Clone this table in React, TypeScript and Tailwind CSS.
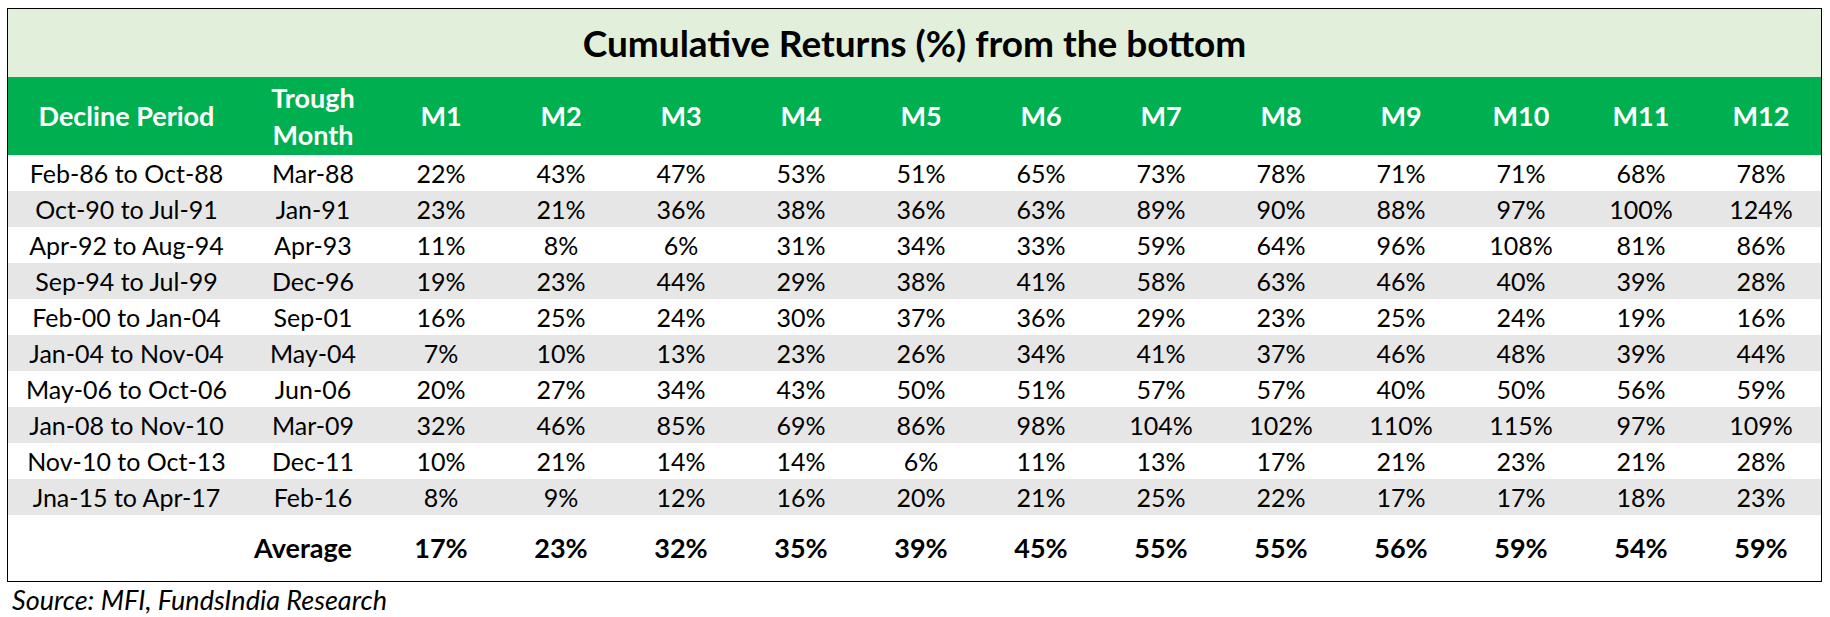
const months = ["M1", "M2", "M3", "M4", "M5", "M6", "M7", "M8", "M9", "M10", "M11", "M12"];

const rows = [
  { period: "Feb-86 to Oct-88", trough: "Mar-88", values: [22, 43, 47, 53, 51, 65, 73, 78, 71, 71, 68, 78] },
  { period: "Oct-90 to Jul-91", trough: "Jan-91", values: [23, 21, 36, 38, 36, 63, 89, 90, 88, 97, 100, 124] },
  { period: "Apr-92 to Aug-94", trough: "Apr-93", values: [11, 8, 6, 31, 34, 33, 59, 64, 96, 108, 81, 86] },
  { period: "Sep-94 to Jul-99", trough: "Dec-96", values: [19, 23, 44, 29, 38, 41, 58, 63, 46, 40, 39, 28] },
  { period: "Feb-00 to Jan-04", trough: "Sep-01", values: [16, 25, 24, 30, 37, 36, 29, 23, 25, 24, 19, 16] },
  { period: "Jan-04 to Nov-04", trough: "May-04", values: [7, 10, 13, 23, 26, 34, 41, 37, 46, 48, 39, 44] },
  { period: "May-06 to Oct-06", trough: "Jun-06", values: [20, 27, 34, 43, 50, 51, 57, 57, 40, 50, 56, 59] },
  { period: "Jan-08 to Nov-10", trough: "Mar-09", values: [32, 46, 85, 69, 86, 98, 104, 102, 110, 115, 97, 109] },
  { period: "Nov-10 to Oct-13", trough: "Dec-11", values: [10, 21, 14, 14, 6, 11, 13, 17, 21, 23, 21, 28] },
  { period: "Jna-15 to Apr-17", trough: "Feb-16", values: [8, 9, 12, 16, 20, 21, 25, 22, 17, 17, 18, 23] },
];

const averages = [17, 23, 32, 35, 39, 45, 55, 55, 56, 59, 54, 59];

const cols = "grid grid-cols-[237px_136px_repeat(12,120px)]";

export default function App() {
  return (
    <div className="min-h-screen bg-white text-black font-['Lato',sans-serif]">
      <div className="pt-[8px] pl-[7px]">
        {/* Table box */}
        <div className="w-[1815px] border border-black">
          <div className="h-[68px] bg-[#e2efda] flex items-center justify-center text-[37px] font-bold">
            Cumulative Returns (%) from the bottom
          </div>

          {/* Header */}
          <div className={`${cols} h-[78px] bg-[#00b050] text-white font-bold text-[27px]`}>
            <div className="flex items-center justify-center">Decline Period</div>
            <div className="flex flex-col items-center justify-center leading-[37px]">
              <span>Trough</span>
              <span>Month</span>
            </div>
            {months.map((m) => (
              <div key={m} className="flex items-center justify-center">
                {m}
              </div>
            ))}
          </div>

          {/* Data rows */}
          {rows.map((r, i) => (
            <div
              key={r.period}
              className={`${cols} h-[36px] leading-[36px] text-[25px] text-center ${i % 2 === 1 ? "bg-[#e7e6e6]" : "bg-white"}`}
            >
              <div>{r.period}</div>
              <div>{r.trough}</div>
              {r.values.map((v, j) => (
                <div key={j}>{v}%</div>
              ))}
            </div>
          ))}

          {/* Average */}
          <div className={`${cols} h-[66px] items-center text-[27px] font-bold text-center leading-[36px]`}>
            <div />
            <div className="pr-[20px]">Average</div>
            {averages.map((v, j) => (
              <div key={j}>{v}%</div>
            ))}
          </div>
        </div>

        <div className="mt-[3px] pl-[5px] text-[27px] italic leading-[30px]">
          Source: MFI, FundsIndia Research
        </div>
      </div>
    </div>
  );
}
